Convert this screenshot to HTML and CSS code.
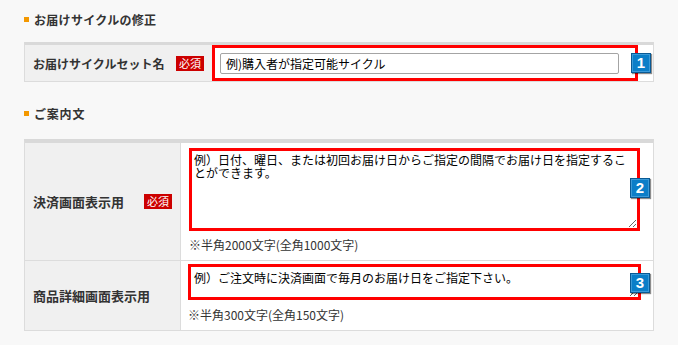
FILE: index.html
```html
<!DOCTYPE html>
<html lang="ja">
<head>
<meta charset="utf-8">
<title>お届けサイクルの修正</title>
<link rel="stylesheet" href="styles.css">
</head>
<body>
<div class="page">
  <h2 class="sec-title first">お届けサイクルの修正</h2>
  <div class="form-table t1">
    <div class="th">お届けサイクルセット名<span class="req">必須</span></div>
    <div class="td">
      <div class="hl-box"><input class="text-input" type="text" value="例)購入者が指定可能サイクル"></div>
      <span class="num num1">1</span>
    </div>
  </div>

  <h2 class="sec-title second">ご案内文</h2>
  <div class="form-table t2">
    <div class="th row1">決済画面表示用<span class="req">必須</span></div>
    <div class="td row1">
      <textarea class="hl-area area1">例）日付、曜日、または初回お届け日からご指定の間隔でお届け日を指定することができます。</textarea>
      <p class="note">※半角2000文字(全角1000文字)</p>
      <span class="num num2">2</span>
    </div>
    <div class="th row2">商品詳細画面表示用</div>
    <div class="td row2">
      <textarea class="hl-area area2">例）ご注文時に決済画面で毎月のお届け日をご指定下さい。</textarea>
      <p class="note">※半角300文字(全角150文字)</p>
      <span class="num num3">3</span>
    </div>
  </div>
</div>
</body>
</html>
```

FILE: styles.css
```css
html, body {
  margin: 0;
  padding: 0;
  background: #f8f8f8;
}
body {
  font-family: "Noto Sans CJK JP", "Noto Sans", sans-serif;
  font-size: 12px;
  color: #000;
}
.page {
  padding: 12px 24px 0 24px;
}
.sec-title {
  display: flex;
  align-items: center;
  gap: 5px;
  margin: 0;
  height: 16px;
  line-height: 16px;
  font-size: 12px;
  font-weight: bold;
  color: #333;
  letter-spacing: 0.3px;
}
.sec-title::before {
  content: "";
  width: 5px;
  height: 5px;
  background: #f39800;
  margin-top: -2px;
}
.sec-title.first { margin-bottom: 14px; }
.sec-title.second { margin-top: 24px; margin-bottom: 17px; letter-spacing: 0.8px; }

.form-table {
  display: grid;
  border: 1px solid #dcdcdc;
  border-top: 3px solid #d9d9d9;
  background: #fff;
}
.t1 { grid-template-columns: 187px 1fr; }
.t2 { grid-template-columns: 156px 1fr; border-top-width: 4px; }

.th {
  background: #f0f0f0;
  display: flex;
  align-items: center;
  justify-content: space-between;
  padding: 0 8px 0 8px;
  font-weight: bold;
  font-size: 13px;
  color: #333;
}
.t1 .th { font-size: 12px; padding-right: 8px; }
.t2 .th { border-right: 1px solid #dcdcdc; }
.t2 .row1 { border-bottom: 1px solid #dcdcdc; }

.req {
  display: inline-block;
  flex: none;
  width: 28px;
  height: 15px;
  line-height: 15px;
  background: #cc0000;
  color: #fff;
  font-size: 11px;
  font-weight: normal;
  text-align: center;
}

.td {
  position: relative;
  background: #fff;
}
.t1 .td { height: 36px; }
.hl-box {
  width: 426px;
  height: 36px;
  box-sizing: border-box;
  border: 3px solid #ff0000;
  padding: 5px 16px 4px 5px;
}
.text-input {
  display: block;
  box-sizing: border-box;
  width: 399px;
  height: 21px;
  margin: 0;
  border: 1px solid #a4a4a4;
  border-radius: 2px;
  padding: 0 5px;
  font-family: "Noto Sans CJK JP", sans-serif;
  font-size: 12px;
  color: #000;
  background: #fff;
  outline: none;
}

.t2 .td.row1 { padding: 5px 0 7px 8px; }
.t2 .td.row2 { padding: 3px 0 7px 7px; }
.hl-area {
  display: block;
  box-sizing: border-box;
  margin: 0;
  border: 3px solid #ff0000;
  padding: 2px 4px 0 2px;
  font-family: "Noto Sans CJK JP", sans-serif;
  font-size: 12px;
  line-height: 13px;
  color: #000;
  background: #fff;
  overflow: hidden;
  outline: none;
}
.area1 { width: 451px; height: 83px; }
.area2 { width: 453px; height: 36px; padding-top: 4px; padding-left: 3px; }

.note {
  margin: 6px 0 0 0;
  height: 16px;
  line-height: 16px;
  font-size: 12px;
  color: #333;
}
.row2 .note { margin-top: 7px; }

.num {
  position: absolute;
  width: 20px;
  height: 20px;
  box-sizing: border-box;
  background: #0b7ec8;
  border: 1px solid #0a5a94;
  box-shadow: inset 0 0 0 1px #3b9ad8, 1px 1px 1px rgba(0,0,0,0.45);
  color: #fff;
  font-family: "Liberation Sans", Arial, sans-serif;
  font-weight: bold;
  font-size: 15px;
  line-height: 18px;
  text-align: center;
}
.num1 { left: 419px; top: 8px; }
.num2 { left: 449px; top: 35px; }
.num3 { left: 449px; top: 12px; }
```
